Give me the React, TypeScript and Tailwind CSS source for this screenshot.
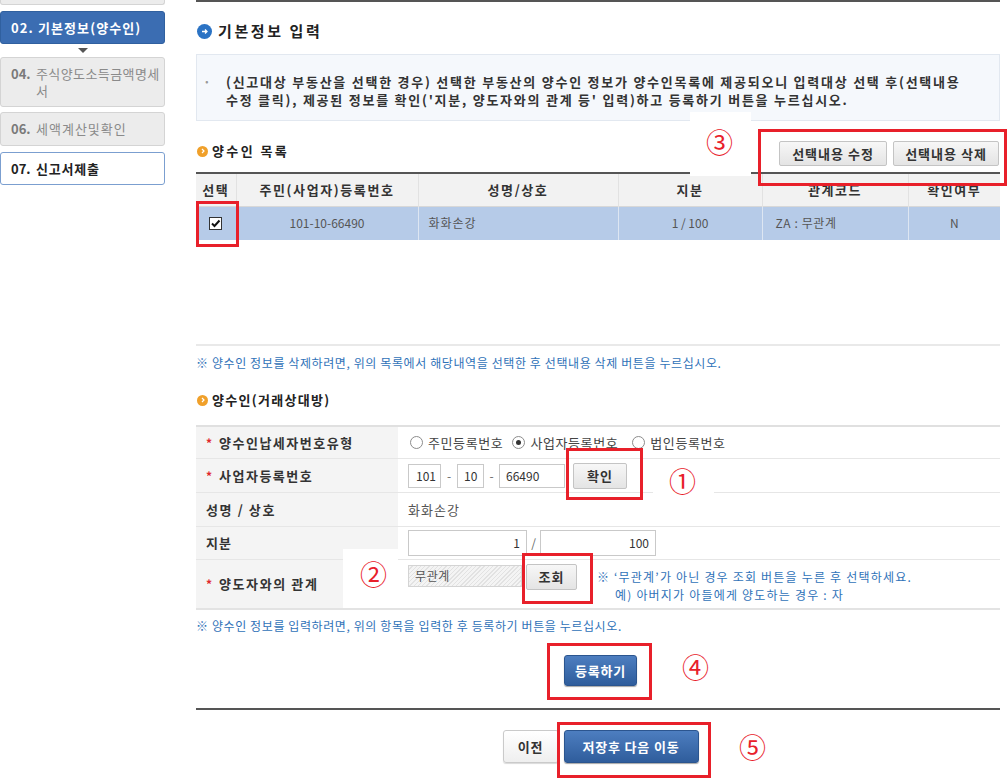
import React from "react";

const RED = "border-[#e8202a]";

function Radio({ checked }: { checked?: boolean }) {
  return (
    <span className="inline-flex w-[13px] h-[13px] rounded-full border border-[#8c8c8c] bg-white items-center justify-center shrink-0">
      {checked && <span className="w-[5px] h-[5px] rounded-full bg-[#333]" />}
    </span>
  );
}

function BlueBtn({ children, w }: { children: React.ReactNode; w: string }) {
  return (
    <div
      className={`${w} h-full rounded-[3px] border border-[#2b558f] bg-gradient-to-b from-[#4d7ec0] to-[#2f5d9c] shadow-[0_1px_1px_rgba(0,0,0,0.35)] flex items-center justify-center text-white font-bold text-[13px] tracking-[0.8px]`}
    >
      {children}
    </div>
  );
}

function GreyBtn({ children, w, h }: { children: React.ReactNode; w: string; h: string }) {
  return (
    <div
      className={`${w} ${h} rounded-[2px] border border-[#c4c4c4] bg-gradient-to-b from-[#f7f7f7] to-[#e4e4e4] flex items-center justify-center text-[#333] font-bold text-[13px] tracking-[1px] shrink-0`}
    >
      {children}
    </div>
  );
}

function Req() {
  return <span className="text-[#e0282d] text-[12px] font-bold w-[13px] inline-block">*</span>;
}

export default function App() {
  return (
    <div className="relative w-[1008px] h-[783px] overflow-hidden bg-white font-['Noto_Sans_CJK_KR',sans-serif] text-[#333]">
      <div className="flex">
        {/* Sidebar */}
        <div className="w-[165px] shrink-0 flex flex-col">
          <div className="h-[5px] bg-[#ececec] border border-t-0 border-[#d4d4d4] rounded-b-[3px]" />
          <div className="mt-[6px] h-[33px] bg-[#3b6db2] rounded-[3px] border border-[#30609f] flex items-center px-[10px] text-white font-bold text-[13px] tracking-[1.1px]">
            02. 기본정보(양수인)
          </div>
          <div className="h-[13px] flex justify-center items-center">
            <div className="w-0 h-0 border-l-[5px] border-r-[5px] border-t-[5px] border-l-transparent border-r-transparent border-t-[#555]" />
          </div>
          <div className="h-[50px] bg-[#ececec] rounded-[3px] border border-[#d4d4d4] flex pl-[10px] pr-[2px] pt-[7px] text-[13px] leading-[17px] text-[#8a8a8a]">
            <span className="w-[25px] shrink-0 font-bold text-[#7a7a7a]">04.</span>
            <span className="tracking-[0.4px]">주식양도소득금액명세서</span>
          </div>
          <div className="mt-[5px] h-[34px] bg-[#ececec] rounded-[3px] border border-[#d4d4d4] flex items-center px-[10px] text-[13px] text-[#8a8a8a]">
            <span className="w-[25px] shrink-0 font-bold text-[#7a7a7a]">06.</span>
            <span className="tracking-[1px]">세액계산및확인</span>
          </div>
          <div className="mt-[6px] h-[33px] bg-white rounded-[3px] border border-[#7b9fd0] flex items-center px-[10px] text-[13px] font-bold text-[#222]">
            <span className="w-[25px] shrink-0">07.</span>
            <span className="tracking-[0.8px]">신고서제출</span>
          </div>
        </div>

        {/* Main */}
        <div className="ml-[31px] w-[804px] flex flex-col border-t-[2px] border-[#555]">
          <div className="mt-[20px] h-[18px] flex items-center">
            <span className="w-[15px] h-[15px] ml-[1px] rounded-full bg-[#2b73c4] flex items-center justify-center">
              <svg width="9" height="9" viewBox="0 0 9 9">
                <path d="M2 4.5h5M5 2.5l2 2-2 2" stroke="white" strokeWidth="1.3" fill="none" />
              </svg>
            </span>
            <span className="ml-[6px] text-[15px] font-bold tracking-[2.6px] text-[#222]">기본정보 입력</span>
          </div>

          <div className="mt-[14px] h-[67px] bg-[#f5f8fc] border border-[#e2e8f0] pt-[18px] pl-[6px] text-[13px] font-bold leading-[18px] tracking-[1.75px] text-[#333]">
            <div className="flex">
              <span className="w-[23px] shrink-0 text-[#999]">·</span>
              <span className="whitespace-nowrap">
                (신고대상 부동산을 선택한 경우) 선택한 부동산의 양수인 정보가 양수인목록에 제공되오니 입력대상 선택 후(선택내용
                <br />
                수정 클릭), 제공된 정보를 확인('지분, 양도자와의 관계 등' 입력)하고 등록하기 버튼을 누르십시오.
              </span>
            </div>
          </div>

          <div className="mt-[20px] h-[25px] flex justify-between">
            <div className="flex items-center pb-[5px]">
              <span className="w-[11px] h-[11px] ml-[1px] rounded-full bg-[#f0a02a] flex items-center justify-center">
                <svg width="6" height="6" viewBox="0 0 6 6">
                  <path d="M2 1l2 2-2 2" stroke="white" strokeWidth="1.2" fill="none" />
                </svg>
              </span>
              <span className="ml-[4px] text-[13px] font-bold tracking-[2.4px] text-[#222]">양수인 목록</span>
            </div>
            <div className="flex gap-[6px] mr-[1px]">
              <GreyBtn w="w-[108px]" h="h-[25px]">선택내용 수정</GreyBtn>
              <GreyBtn w="w-[106px]" h="h-[25px]">선택내용 삭제</GreyBtn>
            </div>
          </div>

          <table className="mt-[6px] w-[804px] border-t-[2px] border-[#555] border-collapse table-fixed">
            <colgroup>
              <col className="w-[40px]" />
              <col className="w-[182px]" />
              <col className="w-[200px]" />
              <col className="w-[144px]" />
              <col className="w-[146px]" />
              <col className="w-[92px]" />
            </colgroup>
            <thead>
              <tr className="h-[33px] bg-[#f2f2f2] text-[13px] font-bold tracking-[1.6px] text-[#333]">
                <th className="font-bold border-r border-[#e2e2e2]">선택</th>
                <th className="font-bold border-r border-[#e2e2e2]">주민(사업자)등록번호</th>
                <th className="font-bold border-r border-[#e2e2e2]">성명/상호</th>
                <th className="font-bold border-r border-[#e2e2e2]">지분</th>
                <th className="font-bold border-r border-[#e2e2e2]">관계코드</th>
                <th className="font-bold">확인여부</th>
              </tr>
            </thead>
            <tbody>
              <tr className="h-[34px] bg-[#b6cbe8] text-[12px] text-[#555] border-t border-[#d8d8d8]">
                <td className="border-r border-[#dde6f2]">
                  <div className="flex justify-center">
                    <span className="w-[13px] h-[13px] border border-[#333] bg-white flex items-center justify-center">
                      <svg width="11" height="11" viewBox="0 0 11 11">
                        <path d="M2 5.5l2.5 2.5L9.5 2.5" stroke="#111" strokeWidth="2" fill="none" />
                      </svg>
                    </span>
                  </div>
                </td>
                <td className="text-center border-r border-[#dde6f2]">101-10-66490</td>
                <td className="pl-[10px] border-r border-[#dde6f2] tracking-[1px]">화화손강</td>
                <td className="text-center border-r border-[#dde6f2]">1 / 100</td>
                <td className="pl-[13px] border-r border-[#dde6f2] tracking-[0.6px]">ZA : 무관계</td>
                <td className="text-center">N</td>
              </tr>
            </tbody>
          </table>

          <div className="mt-[104px] h-[2px] bg-[#e9e9e9]" />
          <div className="mt-[9px] text-[12px] leading-[16px] tracking-[0.6px] text-[#2f72b8]">
            ※ 양수인 정보를 삭제하려면, 위의 목록에서 해당내역을 선택한 후 선택내용 삭제 버튼을 누르십시오.
          </div>

          <div className="mt-[20px] h-[18px] flex items-center">
            <span className="w-[11px] h-[11px] ml-[1px] rounded-full bg-[#f0a02a] flex items-center justify-center">
              <svg width="6" height="6" viewBox="0 0 6 6">
                <path d="M2 1l2 2-2 2" stroke="white" strokeWidth="1.2" fill="none" />
              </svg>
            </span>
            <span className="ml-[4px] text-[13px] font-bold tracking-[1.3px] text-[#222]">양수인(거래상대방)</span>
          </div>

          {/* Form */}
          <div className="mt-[16px] border-t-[2px] border-[#e0e0e0] text-[13px]">
            <div className="flex h-[32px] border-b border-[#e6e6e6]">
              <div className="w-[202px] bg-[#f4f4f4] flex items-center pl-[10px] font-bold tracking-[1.5px]">
                <Req />
                양수인납세자번호유형
              </div>
              <div className="flex-1 flex items-center pl-[12px] text-[#444] tracking-[0.6px]">
                <Radio />
                <span className="ml-[5px]">주민등록번호</span>
                <span className="ml-[9px]" />
                <Radio checked />
                <span className="ml-[5px]">사업자등록번호</span>
                <span className="ml-[14px]" />
                <Radio />
                <span className="ml-[5px]">법인등록번호</span>
              </div>
            </div>

            <div className="flex h-[34px] border-b border-[#e6e6e6]">
              <div className="w-[202px] bg-[#f4f4f4] flex items-center pl-[10px] font-bold tracking-[1.5px]">
                <Req />
                사업자등록번호
              </div>
              <div className="flex-1 flex items-center pl-[10px] text-[12px] text-[#333]">
                <div className="w-[33px] h-[24px] border border-[#c9c9c9] flex items-center pl-[7px]">101</div>
                <div className="w-[16px] text-center text-[#666]">-</div>
                <div className="w-[27px] h-[24px] border border-[#c9c9c9] flex items-center pl-[6px]">10</div>
                <div className="w-[15px] text-center text-[#666]">-</div>
                <div className="w-[66px] h-[24px] border border-[#c9c9c9] flex items-center pl-[6px]">66490</div>
                <div className="ml-[8px]">
                  <GreyBtn w="w-[54px]" h="h-[26px]">확인</GreyBtn>
                </div>
              </div>
            </div>

            <div className="flex h-[34px] border-b border-[#e6e6e6]">
              <div className="w-[202px] bg-[#f4f4f4] flex items-center pl-[10px] font-bold tracking-[1.6px]">
                성명 / 상호
              </div>
              <div className="flex-1 flex items-center pl-[10px] text-[#555] tracking-[1px]">화화손강</div>
            </div>

            <div className="flex h-[33px] border-b border-[#e6e6e6]">
              <div className="w-[202px] bg-[#f4f4f4] flex items-center pl-[10px] font-bold tracking-[1px]">지분</div>
              <div className="flex-1 flex items-center pl-[10px] text-[12px] text-[#333]">
                <div className="w-[119px] h-[26px] border border-[#c9c9c9] flex items-center justify-end pr-[6px]">1</div>
                <div className="w-[13px] text-center text-[#666]">/</div>
                <div className="w-[116px] h-[26px] border border-[#c9c9c9] flex items-center justify-end pr-[6px]">100</div>
              </div>
            </div>

            <div className="flex h-[50px] border-b-[2px] border-[#e3e3e3]">
              <div className="w-[202px] bg-[#f4f4f4] flex items-center pl-[10px] font-bold tracking-[1.6px]">
                <Req />
                양도자와의 관계
              </div>
              <div className="flex-1 flex items-start pl-[10px] pt-[4px]">
                <div className="w-[114px] h-[22px] mt-[1px] border border-[#d4d4d4] bg-[repeating-linear-gradient(135deg,#f4f4f4_0px,#f4f4f4_2px,#e2e2e2_2px,#e2e2e2_3px)] flex items-center pl-[6px] text-[12px] text-[#555] tracking-[0.6px]">
                  무관계
                </div>
                <div className="ml-[4px]">
                  <GreyBtn w="w-[51px]" h="h-[26px]">조회</GreyBtn>
                </div>
                <div className="ml-[20px] pt-[4px] text-[12px] leading-[18px] tracking-[1.2px] text-[#2f72b8]">
                  <div>※ ‘무관계’가 아닌 경우 조회 버튼을 누른 후 선택하세요.</div>
                  <div className="pl-[18px]">예) 아버지가 아들에게 양도하는 경우 : 자</div>
                </div>
              </div>
            </div>
          </div>

          <div className="mt-[8px] text-[12px] leading-[16px] tracking-[0.6px] text-[#2f72b8]">
            ※ 양수인 정보를 입력하려면, 위의 항목을 입력한 후 등록하기 버튼을 누르십시오.
          </div>

          <div className="mt-[21px] h-[31px] flex justify-center pl-[5px]">
            <BlueBtn w="w-[73px]">등록하기</BlueBtn>
          </div>

          <div className="mt-[22px] h-[2px] bg-[#555]" />

          <div className="mt-[20px] h-[33px] flex justify-center gap-[5px] pl-[5px]">
            <div className="w-[56px] h-full rounded-[3px] border border-[#cacaca] bg-gradient-to-b from-white to-[#efefef] shadow-[0_1px_1px_rgba(0,0,0,0.15)] flex items-center justify-center text-[13px] font-bold text-[#333] tracking-[0.8px]">
              이전
            </div>
            <BlueBtn w="w-[135px]">저장후 다음 이동</BlueBtn>
          </div>
        </div>
      </div>

      {/* Annotation overlays */}
      <div className="absolute left-[690px] top-[112px] w-[61px] h-[64px] bg-white" />
      <div className="absolute left-[653px] top-[461px] w-[61px] h-[35px] bg-white" />
      <div className="absolute left-[343px] top-[549px] w-[55px] h-[59px] bg-white" />

      <span className="absolute left-[706px] top-[128px] text-[27px] leading-none text-[#e8202a]">③</span>
      <span className="absolute left-[669px] top-[467px] text-[27px] leading-none text-[#e8202a]">①</span>
      <span className="absolute left-[360px] top-[560px] text-[27px] leading-none text-[#e8202a]">②</span>
      <span className="absolute left-[682px] top-[653px] text-[27px] leading-none text-[#e8202a]">④</span>
      <span className="absolute left-[739px] top-[733px] text-[27px] leading-none text-[#e8202a]">⑤</span>

      <div className={`absolute left-[196px] top-[201px] w-[43px] h-[46px] border-[3px] ${RED}`} />
      <div className={`absolute left-[758px] top-[129px] w-[249px] h-[57px] border-[3px] ${RED}`} />
      <div className={`absolute left-[566px] top-[448px] w-[77px] h-[52px] border-[3px] ${RED}`} />
      <div className={`absolute left-[522px] top-[553px] w-[71px] h-[51px] border-[3px] ${RED}`} />
      <div className={`absolute left-[547px] top-[643px] w-[105px] h-[57px] border-[3px] ${RED}`} />
      <div className={`absolute left-[557px] top-[722px] w-[154px] h-[56px] border-[3px] ${RED}`} />
    </div>
  );
}
